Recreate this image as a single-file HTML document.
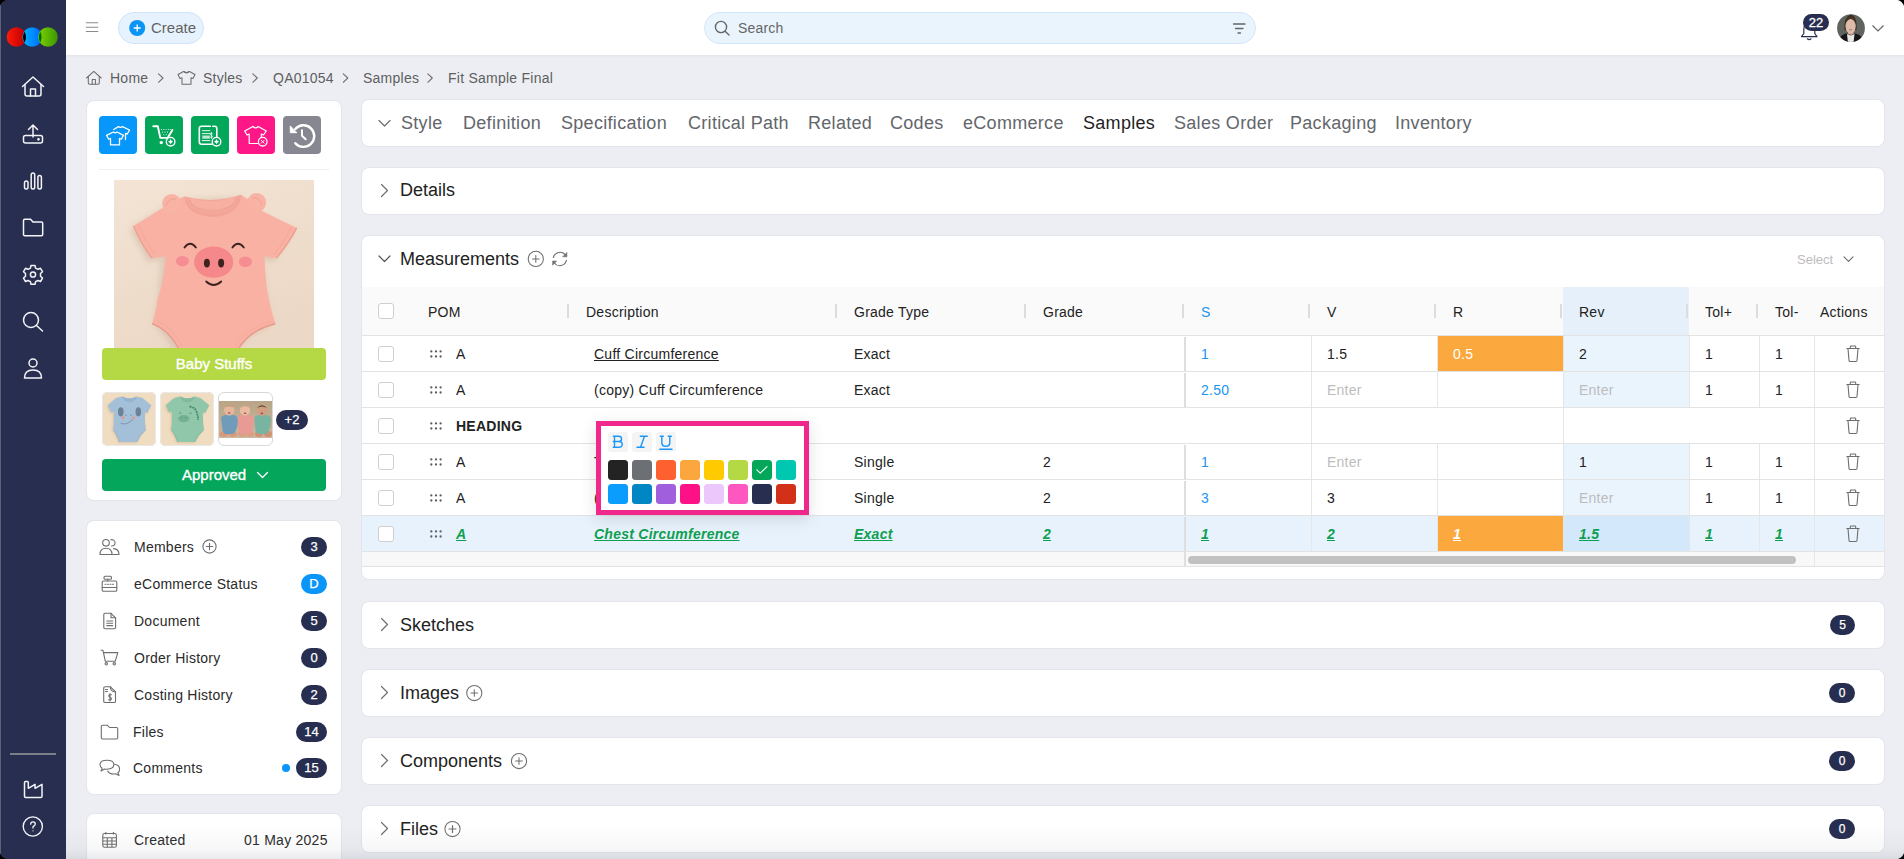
<!DOCTYPE html>
<html><head><meta charset="utf-8">
<style>
*{box-sizing:border-box;margin:0;padding:0}
html,body{width:1904px;height:859px;overflow:hidden}
body{font-family:"Liberation Sans",sans-serif;background:#eceef3;position:relative;color:#222}
.abs{position:absolute}
#side{left:0;top:0;width:66px;height:859px;background:#272e4f}
#hdr{left:66px;top:0;width:1838px;height:55px;background:#fff}
.card{position:absolute;background:#fff;border:1px solid #e3e5ea;border-radius:8px}
.badge{position:absolute;background:#272e4f;color:#fff;font-size:13px;height:20px;border-radius:10px;text-align:center;line-height:20px;-webkit-text-stroke:0.25px #fff}
svg{position:absolute;overflow:visible}
.t{position:absolute;white-space:nowrap}
.t[style*="font-size:14px"]{letter-spacing:0.25px}
</style></head><body>
<div id="side" class="abs">
 <!-- logo -->
 <svg style="left:0;top:0" width="66" height="55">
  <defs>
   <linearGradient id="gr" x1="0" x2="1"><stop offset="0" stop-color="#ff1a0a"/><stop offset="1" stop-color="#b80000"/></linearGradient>
   <linearGradient id="gb" x1="0" x2="1"><stop offset="0" stop-color="#00b4ff"/><stop offset="1" stop-color="#0066ff"/></linearGradient>
   <linearGradient id="gg" x1="0" x2="1"><stop offset="0" stop-color="#7ad400"/><stop offset="1" stop-color="#3c9600"/></linearGradient>
  </defs>
  <circle cx="16.4" cy="37" r="9.8" fill="url(#gr)"/>
  <circle cx="32.2" cy="37" r="9.8" fill="url(#gb)"/>
  <circle cx="48" cy="37" r="9.8" fill="url(#gg)"/>
  <path d="M24.5 31.5 Q21.5 37 24.5 42.5 Q27.5 37 24.5 31.5Z" fill="#000"/>
  <path d="M40.2 31.5 Q37.5 37 40.2 42.5 Q43 37 40.2 31.5Z" fill="#006b00"/>
 </svg>
 <g></g>
 <svg style="left:0;top:0" width="66" height="859" fill="none" stroke="#f4f4f7" stroke-width="1.5" stroke-linecap="round" stroke-linejoin="round">
  <!-- home -->
  <path d="M22.5 86.5 L33 77 L43.5 86.5"/>
  <path d="M25 84.5 V94 Q25 96 27 96 H39 Q41 96 41 94 V84.5"/>
  <path d="M30.5 96 V89 H35.5 V96"/>
  <!-- upload -->
  <path d="M33 137 V125 M28.5 129.5 L33 125 L37.5 129.5"/>
  <rect x="23.5" y="135.5" width="19" height="7.5" rx="2"/>
  <circle cx="38.5" cy="139.3" r="0.6" fill="#fff"/>
  <!-- bar chart -->
  <rect x="24.5" y="181" width="3.5" height="8" rx="1.75"/>
  <rect x="31.2" y="173" width="3.5" height="16" rx="1.75"/>
  <rect x="37.9" y="175.5" width="3.5" height="13.5" rx="1.75"/>
  <!-- folder -->
  <path d="M23.5 220.5 Q23.5 219.3 24.7 219.3 H30.5 L33 222 H41.5 Q42.7 222 42.7 223.2 V234.5 Q42.7 235.7 41.5 235.7 H24.7 Q23.5 235.7 23.5 234.5Z"/>
  <!-- gear -->
  <path d="M31 265.5 h4 l0.6 2.6 l2.4 1.2 l2.5 -1 l2 3.4 l-2 1.8 v2.8 l2 1.8 l-2 3.4 l-2.5 -1 l-2.4 1.2 l-0.6 2.6 h-4 l-0.6 -2.6 l-2.4 -1.2 l-2.5 1 l-2 -3.4 l2 -1.8 v-2.8 l-2 -1.8 l2 -3.4 l2.5 1 l2.4 -1.2 z"/>
  <circle cx="33" cy="274.5" r="2.6"/>
  <!-- search -->
  <circle cx="31" cy="320" r="7.5"/>
  <path d="M36.5 325.5 L42.5 331"/>
  <!-- user -->
  <circle cx="33" cy="363" r="4"/>
  <path d="M24.5 378 Q24.5 370 33 370 Q41.5 370 41.5 378 Z"/>
  <!-- factory -->
  <path d="M24.5 782.5 Q24.5 781.5 25.5 781.5 H27.5 Q28.3 781.5 28.3 782.5 V788.3 L35 784.3 V788.3 L42 784.3 V796.3 Q42 797.5 40.8 797.5 H25.7 Q24.5 797.5 24.5 796.3 Z" stroke-width="1.5"/>
  <!-- help -->
  <circle cx="32.8" cy="826.5" r="9.6" stroke-width="1.4"/>
  <path d="M30.7 824.2 Q30.7 821.8 33 821.8 Q35.3 821.8 35.3 824 Q35.3 825.5 33 826.6 V828" stroke-width="1.3"/>
  <circle cx="33" cy="830.8" r="0.6" fill="#fff" stroke="none"/>
 </svg>
 <div class="abs" style="left:10px;top:753px;width:46px;height:2px;background:#7b7e87"></div>
</div>
<div id="hdr" class="abs"></div>
<div class="abs" style="left:66px;top:55px;width:1838px;height:3px;background:linear-gradient(#e3e5ea,#eceef3)"></div>
<svg style="left:0;top:0" width="1904" height="55" fill="none" stroke-linecap="round">
 <path d="M86.3 22.8 H97.8 M86.3 27.3 H97.8 M86.3 31.5 H97.8" stroke="#8a8a8a" stroke-width="1.1"/>
</svg>
<div class="abs" style="left:118px;top:12px;width:86px;height:32px;border-radius:16px;background:#e6f2fd;border:1px solid #cfe4f8"></div>
<svg style="left:0;top:0" width="300" height="55">
 <circle cx="137.2" cy="28" r="8" fill="#0a95f5"/>
 <path d="M137.2 24.5 V31.5 M133.7 28 H140.7" stroke="#fff" stroke-width="1.3"/>
</svg>
<div class="t" style="left:151px;top:19px;font-size:15px;color:#636363">Create</div>
<div class="abs" style="left:704px;top:12px;width:552px;height:32px;border-radius:16px;background:#eaf4fd;border:1px solid #d3e7fa"></div>
<svg style="left:0;top:0" width="1904" height="55" fill="none" stroke="#666" stroke-width="1.4" stroke-linecap="round">
 <circle cx="721" cy="27" r="5.6"/>
 <path d="M725.2 31.2 L729 35"/>
 <path d="M1233.5 24 H1245 M1235.5 28.5 H1243 M1238 33 H1240.5" stroke-width="1.3"/>
</svg>
<div class="t" style="left:738px;top:20px;font-size:14px;color:#666;letter-spacing:0.2px">Search</div>
<svg style="left:0;top:0" width="1904" height="55" fill="none" stroke="#272e4f" stroke-width="1.3" stroke-linecap="round" stroke-linejoin="round">
 <path d="M1801.5 36.7 H1817 L1814.8 33.5 V29 Q1814.5 23 1809.2 23 Q1804 23 1803.8 29 V33.5 Z" stroke-width="1.2"/>
 <path d="M1807.3 38.8 Q1809.2 40.3 1811 38.8" stroke-width="1.2"/>
</svg>
<div class="abs" style="left:1803px;top:14px;width:26px;height:17px;border-radius:9px;background:#272e4f;color:#fff;font-size:13px;line-height:17px;text-align:center;-webkit-text-stroke:0.3px #fff">22</div>
<svg style="left:0;top:0" width="1904" height="55">
 <defs><clipPath id="avc"><circle cx="1851" cy="28.2" r="13.9"/></clipPath></defs>
 <g clip-path="url(#avc)">
 <rect x="1836" y="13" width="30" height="30" fill="#5f645e"/>
 <path d="M1844.5 30 Q1843.5 17 1850.5 14.5 Q1857.5 15.5 1856.5 30 Z" fill="#3f2c20"/>
 <rect x="1848" y="31" width="5.5" height="5" fill="#cfac97"/>
 <ellipse cx="1850.6" cy="26.3" rx="5.1" ry="7.2" fill="#dcbca9"/>
 <path d="M1845.5 23 Q1847 16.5 1851 16.5 Q1855.5 16.5 1856 23 Q1853 18.5 1851 18.8 Q1848 18.8 1845.5 23Z" fill="#4a3325"/>
 <path d="M1838 43 Q1839 35 1846.5 33.5 L1850.8 35 L1855 33.5 Q1863 35 1864 43 Z" fill="#161616"/>
 <path d="M1847 34 L1850.8 35.5 L1854.5 34 L1853.5 43 H1848 Z" fill="#e8e8e6"/>
 <ellipse cx="1850.6" cy="29.8" rx="1.8" ry="0.7" fill="#b88378"/>
 </g>
 <path d="M1872.5 25.5 L1878 31 L1883.5 25.5" fill="none" stroke="#666" stroke-width="1.2"/>
</svg>


<!-- breadcrumb -->
<svg style="left:0;top:0" width="600" height="100" fill="none" stroke="#6d6d6d" stroke-width="1.05" stroke-linecap="round" stroke-linejoin="round">
 <path d="M86.5 78 L93.8 71.3 L101.2 78"/>
 <path d="M88.3 76.5 V83 Q88.3 84.3 89.6 84.3 H98 Q99.3 84.3 99.3 83 V76.5"/>
 <path d="M92.2 84.3 V79.5 H95.4 V84.3"/>
 <path d="M158.5 73.8 L163 78 L158.5 82.3"/>
 <path d="M252.8 73.8 L257.3 78 L252.8 82.3"/>
 <path d="M343.3 73.8 L347.8 78 L343.3 82.3"/>
 <path d="M427.8 73.8 L432.3 78 L427.8 82.3"/>
 <path d="M183.5 71.5 Q186.5 74.5 189.5 71.5 L195 74.5 L193 78.5 L191 77.8 V84.3 H182 V77.8 L180 78.5 L178 74.5 Z"/>
 <path d="M184.2 71.5 Q186.5 73.6 188.8 71.5"/>
</svg>
<div class="t" style="left:110px;top:70px;font-size:14px;color:#5f5f5f">Home</div>
<div class="t" style="left:203px;top:70px;font-size:14px;color:#5f5f5f">Styles</div>
<div class="t" style="left:273px;top:70px;font-size:14px;color:#5f5f5f">QA01054</div>
<div class="t" style="left:363px;top:70px;font-size:14px;color:#5f5f5f">Samples</div>
<div class="t" style="left:448px;top:70px;font-size:14px;color:#5f5f5f">Fit Sample Final</div>

<!-- left card 1 -->
<div class="card" style="left:86px;top:100px;width:256px;height:401px"></div>
<div class="abs" style="left:99px;top:116px;width:38px;height:38px;border-radius:4px;background:#0797fb"></div>
<div class="abs" style="left:145px;top:116px;width:38px;height:38px;border-radius:4px;background:#04a65a"></div>
<div class="abs" style="left:191px;top:116px;width:38px;height:38px;border-radius:4px;background:#04a65a"></div>
<div class="abs" style="left:237px;top:116px;width:38px;height:38px;border-radius:4px;background:#fe1787"></div>
<div class="abs" style="left:283px;top:116px;width:38px;height:38px;border-radius:4px;background:#868791"></div>
<svg style="left:0;top:0" width="400" height="200" fill="none" stroke="#fff" stroke-width="1.3" stroke-linecap="round" stroke-linejoin="round">
 <!-- shirts -->
 <path d="M113.5 132 Q115.2 133.8 117 132 L123.5 135.3 L121.3 139.2 L119.5 138.5 V144.8 H110.5 V138.5 L108.7 139.2 L106.5 135.3 Z"/>
 <path d="M113.7 129.5 L118.5 126.6 Q120.5 128.3 122.5 126.6 L129.5 130 L127.3 134 L125.5 133.5 V139.5"/>
 <!-- cart -->
 <path d="M153.3 126.3 H157.8 L160.3 137.9 H167.6 L172.4 130" stroke-width="1.9"/>
 <circle cx="161.5" cy="129.5" r="0.55" fill="#fff" stroke="none"/><circle cx="163.8" cy="129.5" r="0.55" fill="#fff" stroke="none"/><circle cx="166.1" cy="129.5" r="0.55" fill="#fff" stroke="none"/><circle cx="168.4" cy="129.5" r="0.55" fill="#fff" stroke="none"/><circle cx="170.3" cy="129.5" r="0.55" fill="#fff" stroke="none"/><circle cx="162.5" cy="132.1" r="0.55" fill="#fff" stroke="none"/><circle cx="165" cy="132.1" r="0.55" fill="#fff" stroke="none"/><circle cx="167.5" cy="132.1" r="0.55" fill="#fff" stroke="none"/><circle cx="163.8" cy="134.7" r="0.55" fill="#fff" stroke="none"/><circle cx="166.2" cy="134.7" r="0.55" fill="#fff" stroke="none"/>
 <circle cx="161.3" cy="142.6" r="1.7" fill="#fff" stroke="none"/>
 <circle cx="170.6" cy="141.7" r="4.3" stroke-width="1.4" fill="#04a65a"/>
 <path d="M170.6 139.1 Q171.1 141.2 173.2 141.7 Q171.1 142.2 170.6 144.29999999999998 Q170.1 142.2 168.0 141.7 Q170.1 141.2 170.6 139.1Z" fill="#fff" stroke="none"/>
 <!-- invoice -->
 <path d="M210.3 126.2 H201.5 Q199.3 126.2 199.3 128.4 V142 Q199.3 144.2 201.5 144.2 H212" stroke-width="1.6"/>
 <path d="M212.8 126.2 H214.6 Q216.8 126.2 216.8 128.4 V137.5" stroke-width="1.6"/>
 <path d="M202.3 130.7 H209.8 M202.3 133.6 H209.8 M202.3 140.6 H209.8" stroke-width="0.9"/>
 <rect x="202.3" y="135.5" width="7.5" height="3.2" fill="#fff" stroke="none" opacity="0.75"/>
 <path d="M212.6 134 Q212.1 133.2 211.3 133.2 Q210.3 133.3 210.4 134.3 Q210.6 135.2 211.4 135.4 Q212.5 135.8 212.4 136.8 Q212.2 137.7 211.2 137.6 Q210.5 137.5 210.2 137 M211.4 132.4 V138.4" stroke-width="0.8"/>
 <circle cx="216.5" cy="141.7" r="4.3" stroke-width="1.4" fill="#04a65a"/>
 <path d="M216.5 139.1 Q217.0 141.2 219.1 141.7 Q217.0 142.2 216.5 144.29999999999998 Q216.0 142.2 213.9 141.7 Q216.0 141.2 216.5 139.1Z" fill="#fff" stroke="none"/>
 <!-- shirt x -->
 <path d="M253 126.5 Q255.6 129.3 258.2 126.5 L266.3 131 L263.5 135 L261.3 134 V136.8" stroke-width="1.2"/><path d="M258 143.5 H249.2 V134 L247 135 L244.7 131 L253 126.5" stroke-width="1.2"/>
 <circle cx="262.7" cy="141.7" r="4.3" stroke-width="1.3"/>
 <path d="M261.3 140.3 L264.1 143.1 M264.1 140.3 L261.3 143.1" stroke-width="1"/>
 <!-- history -->
 <path d="M295.3 129 A10.8 10.8 0 1 1 295.3 143.2" stroke-width="2.4"/>
 <path d="M290.3 126.3 V132.7 H296.5 Z" fill="#fff" stroke-width="1"/>
 <path d="M302 130.3 V135.8 L305.7 139.3" stroke-width="2"/>
</svg>
<div class="abs" style="left:99px;top:169px;width:230px;height:1px;background:#eceef1"></div>

<!-- main image -->
<svg style="left:114px;top:180px" width="200" height="168" viewBox="0 0 200 168">
 <defs>
  <linearGradient id="bg1" x1="0" y1="0" x2="0.4" y2="1"><stop offset="0" stop-color="#f3e4d5"/><stop offset="1" stop-color="#ecd8c6"/></linearGradient>
  <filter id="bl" x="-20%" y="-20%" width="140%" height="140%"><feGaussianBlur stdDeviation="3"/></filter>
 </defs>
 <rect width="200" height="168" fill="url(#bg1)"/>
 <path d="M70 17 L52 25.5 L19 46 L37 79 L50.5 76 Q48 110 43 141 Q55 152 63 168 H126 Q134 152 160 142 Q155 110 151 76 L162 79 L183 48 L148 31 L127 15 Z" fill="#cfb29e" opacity="0.55" filter="url(#bl)" transform="translate(-3,3)"/>
 <path d="M70.4 16.6 Q61 20 52.8 25.4 L19.5 46 Q27 64 38.1 78.2 L51.8 76.2 Q49 105 44 117.3 Q42 132 38.1 143.7 Q55 150 64.5 168 H125 Q136 150 161.3 143.7 Q157 130 154.4 117.3 Q151 100 150.5 76.2 L162.3 78.2 Q175 63 182.8 47.9 L148.6 31.3 Q138 21 127 14.7 Q99 28 70.4 16.6Z" fill="#f9b1a4"/>
 <path d="M19.5 46 Q27 64 38.1 78.2 M182.8 47.9 Q175 63 162.3 78.2" stroke="#eb9d8f" stroke-width="1.2" fill="none"/>
 <path d="M24 44 Q31 61 41 75 M178 46 Q171 61 160 75" stroke="#f2a596" stroke-width="0.8" fill="none"/>
 <path d="M70.4 16.6 C71 44 127 44 127 14.7 Q99 24 70.4 16.6Z" fill="#f4a698"/>
 <path d="M75.5 18 C76.5 35.5 121.5 35.5 122 16.5 Q99 25 75.5 18Z" fill="#f8b0a2"/>
 <path d="M76 19.5 C77 34 121 34 121.5 18" stroke="#eba092" stroke-width="0.9" fill="none"/>
 <path d="M72.5 20 C74 41 125 41 125.5 17.5" stroke="#eda193" stroke-width="0.7" fill="none"/>
 <circle cx="57.7" cy="23.5" r="9.5" fill="#f9b3a5"/>
 <circle cx="142.7" cy="22.5" r="9.5" fill="#f9b3a5"/>
 <path d="M52 26 Q55 17 62 19" stroke="#eea092" stroke-width="1" fill="none"/>
 <path d="M148 25 Q145 16 138 18" stroke="#eea092" stroke-width="1" fill="none"/>
 <path d="M38.1 143.7 Q55 150 64.5 168 M125 168 Q136 150 161.3 143.7" stroke="#e8998b" stroke-width="1.4" fill="none"/>
 <path d="M43 141 Q58 147 68 166 M121 166 Q133 148 157 141" stroke="#f4a899" stroke-width="0.8" fill="none"/>
 <path d="M70.5 67.5 Q76.2 60 81.9 67.5 M118.4 67.5 Q124.1 60 129.8 67.5" stroke="#3d231d" stroke-width="1.9" fill="none" stroke-linecap="round"/>
 <ellipse cx="68.4" cy="81.1" rx="6.6" ry="5.2" fill="#f58d93"/>
 <ellipse cx="131.4" cy="81.7" rx="6.6" ry="5.2" fill="#f58d93"/>
 <ellipse cx="99.7" cy="82.1" rx="19.6" ry="15.6" fill="#f4888b"/>
 <ellipse cx="92.9" cy="83.1" rx="3" ry="4.4" fill="#3d231d"/>
 <ellipse cx="107.1" cy="83.1" rx="3" ry="4.4" fill="#3d231d"/>
 <path d="M92.2 101.5 Q99.7 108.5 107.2 101.5" stroke="#3d231d" stroke-width="1.9" fill="none" stroke-linecap="round"/>
</svg>
<div class="abs" style="left:102px;top:348px;width:224px;height:32px;border-radius:4px;background:#b4d944;color:#fff;font-size:15px;-webkit-text-stroke:0.35px #fff;text-align:center;line-height:32px">Baby Stuffs</div>
<!-- thumbs -->
<svg style="left:102px;top:392px" width="54" height="54" viewBox="0 0 54 54">
 <defs><clipPath id="c1"><rect width="54" height="54" rx="5"/></clipPath>
 <filter id="bl2" x="-20%" y="-20%" width="140%" height="140%"><feGaussianBlur stdDeviation="1.2"/></filter><filter id="bl3"><feGaussianBlur stdDeviation="0.5"/></filter></defs>
 <g clip-path="url(#c1)">
 <rect width="54" height="54" fill="#f0dcc0"/>
 <path d="M20.3 4.4 Q27.5 8.5 34.8 4.4 L40.5 6.1 L49.3 13.2 L45.3 21 L42.9 20.3 Q42.6 30 43.9 37.8 Q38.5 42.5 34.8 50 H17.6 Q15 42.5 11.2 37.8 Q12.4 30 11.8 19.6 L9.1 20.6 L5.8 13.2 L14.2 6.1 Z" fill="#c9ae8e" opacity="0.5" filter="url(#bl2)" transform="translate(-1,1)"/>
 <path d="M20.3 4.4 Q27.5 8.5 34.8 4.4 L40.5 6.1 L49.3 13.2 L45.3 21 L42.9 20.3 Q42.6 30 43.9 37.8 Q38.5 42.5 34.8 50 H17.6 Q15 42.5 11.2 37.8 Q12.4 30 11.8 19.6 L9.1 20.6 L5.8 13.2 L14.2 6.1 Z" fill="#a4c0d9"/>
 <path d="M20.3 4.4 Q27.5 8.5 34.8 4.4 Q33.5 10 27.5 10.5 Q21.5 10 20.3 4.4Z" fill="#97b4ce"/>
 <ellipse cx="18.8" cy="19.8" rx="2.8" ry="4.6" fill="#6d8197"/>
 <ellipse cx="36.3" cy="19.8" rx="2.8" ry="4.6" fill="#6d8197"/>
 <circle cx="21.2" cy="25.8" r="1.4" fill="#f08c8c"/>
 <circle cx="31.6" cy="25.8" r="1.4" fill="#f08c8c"/>
 <path d="M23 23.5 Q24 22.5 25 23.5 M28 23.5 Q29 22.5 30 23.5" stroke="#6d8197" stroke-width="0.6" fill="none"/>
 <path d="M18.5 31 Q24 33.5 28 29.5 Q30 28 31 27.5" stroke="#6d8197" stroke-width="0.7" fill="none"/>
 <path d="M11.5 37.8 Q15 42 17.6 50 M34.8 50 Q38 42 43.6 37.8" stroke="#8eaac3" stroke-width="0.7" fill="none"/>
 </g>
 <rect x="0.5" y="0.5" width="53" height="53" rx="5" fill="none" stroke="#e9e9e9"/>
</svg>
<svg style="left:160px;top:392px" width="54" height="54" viewBox="0 0 54 54">
 <defs><clipPath id="c2"><rect width="54" height="54" rx="5"/></clipPath></defs>
 <g clip-path="url(#c2)">
 <rect width="54" height="54" fill="#f0dcc0"/>
 <path d="M20.3 4.4 Q27.5 8.5 34.8 4.4 L40.5 6.1 L49.3 13.2 L45.3 21 L42.9 20.3 Q42.6 30 43.9 37.8 Q38.5 42.5 34.8 50 H17.6 Q15 42.5 11.2 37.8 Q12.4 30 11.8 19.6 L9.1 20.6 L5.8 13.2 L14.2 6.1 Z" fill="#c9ae8e" opacity="0.5" filter="url(#bl2)" transform="translate(-1,1)"/>
 <path d="M20.3 4.4 Q27.5 8.5 34.8 4.4 L40.5 6.1 L49.3 13.2 L45.3 21 L42.9 20.3 Q42.6 30 43.9 37.8 Q38.5 42.5 34.8 50 H17.6 Q15 42.5 11.2 37.8 Q12.4 30 11.8 19.6 L9.1 20.6 L5.8 13.2 L14.2 6.1 Z" fill="#90c6a9"/>
 <path d="M20.3 4.4 Q27.5 8.5 34.8 4.4 Q33.5 10 27.5 10.5 Q21.5 10 20.3 4.4Z" fill="#83b99c"/>
 <ellipse cx="23.8" cy="26.6" rx="5.6" ry="3.6" fill="#74b091"/>
 <path d="M19 21.5 Q20.3 20 21.6 21.5 M29.2 21.5 Q30.5 20 31.8 21.5" stroke="#3f8e6a" stroke-width="0.7" fill="none"/>
 <circle cx="21.5" cy="25.8" r="0.5" fill="#3f8e6a"/><circle cx="25.5" cy="25.8" r="0.5" fill="#3f8e6a"/>
 <path d="M29.5 14.5 Q33 15 35 17 Q37 20 37.5 23 Q38 25.5 38.2 28" stroke="#3f8e6a" stroke-width="1.8" fill="none" stroke-dasharray="2 0.8"/>
 <path d="M11.5 37.8 Q15 42 17.6 50 M34.8 50 Q38 42 43.6 37.8" stroke="#7fb596" stroke-width="0.7" fill="none"/>
 </g>
 <rect x="0.5" y="0.5" width="53" height="53" rx="5" fill="none" stroke="#e9e9e9"/>
</svg>
<svg style="left:218px;top:392px" width="55" height="54" viewBox="0 0 55 54">
 <defs><clipPath id="c3"><rect x="1" y="9" width="53" height="37"/></clipPath>
 <linearGradient id="pb" x1="0" y1="0" x2="0" y2="1"><stop offset="0" stop-color="#b9a487"/><stop offset="1" stop-color="#cbb89e"/></linearGradient></defs>
 <rect x="0.5" y="0.5" width="54" height="53" rx="5.5" fill="#fff" stroke="#d8d8d8"/>
 <g clip-path="url(#c3)" filter="url(#bl3)">
 <rect x="1" y="9" width="53" height="37" fill="url(#pb)"/>
 <ellipse cx="6" cy="42" rx="5" ry="3" fill="#d99a7c"/><ellipse cx="15" cy="42" rx="4" ry="3" fill="#d99a7c"/>
 <ellipse cx="24" cy="42" rx="4" ry="3" fill="#dba084"/><ellipse cx="32" cy="42" rx="4" ry="3" fill="#dba084"/>
 <ellipse cx="41" cy="42" rx="4" ry="3" fill="#cf9274"/><ellipse cx="50" cy="42" rx="4" ry="3" fill="#cf9274"/>
 <path d="M3 26 Q4 23 8 23 H15 Q19 23 20 27 L19.5 33 Q18 40 15 42 H7 Q4 40 4 33Z" fill="#6f9cb9"/>
 <path d="M19.5 26 Q20.5 23 24 23 H31 Q35 23 36 27 L35.5 33 Q34 40 31 42 H23 Q20 40 20 33Z" fill="#e89b95"/>
 <path d="M36.5 26 Q37.5 23 41 23 H48 Q52 23 53 27 L52.5 33 Q51 40 48 42 H40 Q37 40 37 33Z" fill="#78b4a2"/>
 <circle cx="11.2" cy="18.2" r="5.2" fill="#e6b79c"/>
 <circle cx="27" cy="18.4" r="5.2" fill="#e9bca2"/>
 <circle cx="43.9" cy="18.6" r="5.2" fill="#d29e80"/>
 <path d="M6.5 15.5 Q11 11 16 15.5 Q11 13 6.5 15.5Z" fill="#b88560"/>
 <path d="M22.3 15.5 Q27 11 31.8 15.5 Q27 13 22.3 15.5Z" fill="#c49670"/>
 <path d="M38.8 16 Q44 10.5 49 16 Q44 13 38.8 16Z" fill="#5e402c"/>
 <ellipse cx="11.2" cy="21" rx="1.3" ry="0.8" fill="#a04a44"/><ellipse cx="27" cy="21.2" rx="1.3" ry="0.8" fill="#a04a44"/><ellipse cx="43.9" cy="21.4" rx="1.3" ry="0.8" fill="#a04a44"/>
 </g>
</svg>
<div class="badge" style="left:276px;top:410px;width:32px;font-size:13px">+2</div>
<div class="abs" style="left:102px;top:459px;width:224px;height:32px;border-radius:4px;background:#03a65a;color:#fff;font-size:15px;-webkit-text-stroke:0.35px #fff;line-height:32px"><span style="position:absolute;left:80px">Approved</span></div>
<svg style="left:0;top:0" width="400" height="500" fill="none" stroke="#fff" stroke-width="1.3" stroke-linecap="round" stroke-linejoin="round">
 <path d="M257.5 472.5 L262.5 477.5 L267.5 472.5"/>
</svg>

<!-- left card 2 -->
<div class="card" style="left:86px;top:520px;width:256px;height:275px"></div>

<svg style="left:0;top:0" width="400" height="859" fill="none" stroke="#6e6e6e" stroke-width="1.1" stroke-linecap="round" stroke-linejoin="round">
 <!-- members -->
 <circle cx="106" cy="542.8" r="3.3"/>
 <path d="M100 554.5 Q100 548.3 106 548.3 Q112 548.3 112 554.5 Z"/>
 <path d="M110.8 539.8 A3.2 3.2 0 1 1 111.5 546"/>
 <path d="M113.5 548.6 Q119 549 119 554.5 H112.5"/>
 <circle cx="209.5" cy="546.5" r="6.6"/>
 <path d="M209.5 543.2 V549.8 M206.2 546.5 H212.8"/>
 <!-- ecommerce register -->
 <rect x="104" y="576.3" width="7.5" height="3" rx="1"/>
 <path d="M107.7 579.3 V581"/>
 <path d="M103.5 581 H115.5 Q116.8 581 116.8 582.5 V587.5 H102.2 V582.5 Q102.2 581 103.5 581Z"/>
 <path d="M102.2 587.5 V590 Q102.2 591.3 103.5 591.3 H115.5 Q116.8 591.3 116.8 590 V587.5"/>
 <path d="M105 584.2 H114.5" stroke-dasharray="1 1.5"/>
 <!-- document -->
 <path d="M105 613.3 H111 L115.6 617.8 V627.5 Q115.6 628.7 114.4 628.7 H105 Q103.8 628.7 103.8 627.5 V614.5 Q103.8 613.3 105 613.3Z"/>
 <path d="M111 613.3 V617.8 H115.6"/>
 <path d="M106.8 621 H112.7 M106.8 623.3 H112.7 M106.8 625.6 H112.7"/>
 <!-- cart -->
 <path d="M101 650.3 H103 L105.3 661.3 H115.2 L117.8 652.6 H104"/>
 <circle cx="106.3" cy="663.8" r="1.2"/>
 <circle cx="114.3" cy="663.8" r="1.2"/>
 <!-- costing -->
 <path d="M105 686.8 H110.5 L115.5 691.8 V701.2 Q115.5 702.5 114.2 702.5 H105 Q103.7 702.5 103.7 701.2 V688.1 Q103.7 686.8 105 686.8Z"/>
 <path d="M110.3 687 Q110.5 691.5 115.3 692"/>
 <path d="M105.5 689.5 H107.5 M105.5 691.5 H107.5"/>
 <path d="M111.4 694.8 Q109.2 694 108.8 695.7 Q108.8 697 109.8 697.2 Q111.6 697.6 111.4 699 Q110.8 700.6 108.6 699.8 M110 693.5 V701"/>
 <!-- files folder -->
 <path d="M101.3 726.5 Q101.3 725.3 102.5 725.3 H107.5 L109.5 727.5 H116.5 Q117.7 727.5 117.7 728.7 V737.8 Q117.7 739 116.5 739 H102.5 Q101.3 739 101.3 737.8Z"/>
 <!-- comments -->
 <path d="M107 760.2 Q100 760.2 100 764.6 Q100 767.2 102.2 768.2 L101 771 L104.6 769 Q105.7 769.2 107 769.2 Q113.8 769.2 113.8 764.6 Q113.8 760.2 107 760.2Z"/>
 <path d="M114.6 764.3 Q119.6 765 119.6 769.2 Q119.6 771.5 117.9 772.5 L119 775.5 L115.8 773.8 Q114.8 774 113.8 774 Q109 774 107.8 771"/>
 <!-- calendar -->
 <rect x="102.8" y="833.5" width="13.6" height="13.7" rx="1.8"/>
 <path d="M102.8 837.7 H116.4 M102.8 841 H116.4 M102.8 844.2 H116.4 M107.3 837.7 V847 M111.9 837.7 V847 M105.8 832 V834.5 M113.4 832 V834.5"/>
</svg>
<div class="t" style="left:134px;top:539px;font-size:14px;color:#2a2a2a">Members</div>
<div class="t" style="left:134px;top:576px;font-size:14px;color:#2a2a2a">eCommerce Status</div>
<div class="t" style="left:134px;top:613px;font-size:14px;color:#2a2a2a">Document</div>
<div class="t" style="left:134px;top:650px;font-size:14px;color:#2a2a2a">Order History</div>
<div class="t" style="left:134px;top:687px;font-size:14px;color:#2a2a2a">Costing History</div>
<div class="t" style="left:133px;top:724px;font-size:14px;color:#2a2a2a">Files</div>
<div class="t" style="left:133px;top:760px;font-size:14px;color:#2a2a2a">Comments</div>
<div class="badge" style="left:301px;top:537px;width:26px">3</div>
<div class="badge" style="left:301px;top:574px;width:26px;background:#0a96f8">D</div>
<div class="badge" style="left:301px;top:611px;width:26px">5</div>
<div class="badge" style="left:301px;top:648px;width:26px">0</div>
<div class="badge" style="left:301px;top:685px;width:26px">2</div>
<div class="badge" style="left:296px;top:722px;width:31px">14</div>
<div class="abs" style="left:281.5px;top:764px;width:8px;height:8px;border-radius:4px;background:#0a96f8"></div>
<div class="badge" style="left:296px;top:758px;width:31px">15</div>

<!-- left card 3 -->
<div class="card" style="left:86px;top:813px;width:256px;height:80px"></div>
<svg style="left:0;top:0" width="400" height="859" fill="none" stroke="#6e6e6e" stroke-width="1.1">
 <rect x="102.8" y="833.5" width="13.6" height="13.7" rx="1.8"/>
 <path d="M102.8 837.7 H116.4 M102.8 841 H116.4 M102.8 844.2 H116.4 M107.3 837.7 V847 M111.9 837.7 V847 M105.8 832 V834.5 M113.4 832 V834.5"/>
</svg>
<div class="t" style="left:134px;top:832px;font-size:14px;color:#2a2a2a">Created</div>
<div class="t" style="left:244px;top:832px;font-size:14px;color:#2a2a2a">01 May 2025</div>

<!-- main cards -->
<div class="card" style="left:361px;top:99px;width:1524px;height:48px"></div>
<div class="card" style="left:361px;top:167px;width:1524px;height:48px"></div>
<div class="card" style="left:361px;top:235px;width:1524px;height:345px;overflow:hidden" id="meas"></div>
<div class="card" style="left:361px;top:601px;width:1524px;height:48px"></div>
<div class="card" style="left:361px;top:669px;width:1524px;height:48px"></div>
<div class="card" style="left:361px;top:737px;width:1524px;height:48px"></div>
<div class="card" style="left:361px;top:805px;width:1524px;height:48px"></div>
<svg style="left:0;top:0" width="1904" height="859" fill="none" stroke="#6e6e6e" stroke-width="1.2" stroke-linecap="round" stroke-linejoin="round">
 <path d="M379 120.5 L384.5 126 L390 120.5"/>
 <path d="M381.5 184.5 L387.5 190.5 L381.5 196.5"/>
 <path d="M379 256 L384.5 261.5 L390 256" stroke="#555"/>
 <path d="M381.5 618.5 L387.5 624.5 L381.5 630.5"/>
 <path d="M381.5 686.5 L387.5 692.5 L381.5 698.5"/>
 <path d="M381.5 754.5 L387.5 760.5 L381.5 766.5"/>
 <path d="M381.5 822.5 L387.5 828.5 L381.5 834.5"/>
 <circle cx="535.8" cy="258.9" r="7.6" stroke-width="1.05"/>
 <path d="M535.8 255.6 V262.2 M532.5 258.9 H539.1" stroke-width="1.05"/>
 <path d="M553.3 257.5 A6.9 6.9 0 0 1 565.6 255.2" stroke-width="1.1"/>
 <path d="M566.9 252.8 V256.8 H562.9 Z" fill="#6e6e6e" stroke-width="0.6"/>
 <path d="M566.4 260.4 A6.9 6.9 0 0 1 554.1 262.8" stroke-width="1.1"/>
 <path d="M552.8 261.1 H556.6 L552.8 265 Z" fill="#6e6e6e" stroke-width="0.6"/>
 <circle cx="474.3" cy="693" r="7.6" stroke-width="1.05"/>
 <path d="M474.3 689.7 V696.3 M471.0 693 H477.6" stroke-width="1.05"/>
 <circle cx="519" cy="761" r="7.6" stroke-width="1.05"/>
 <path d="M519 757.7 V764.3 M515.7 761 H522.3" stroke-width="1.05"/>
 <circle cx="452.5" cy="829" r="7.6" stroke-width="1.05"/>
 <path d="M452.5 825.5 V832.5 M449 829 H456"/>
 <path d="M1844 256.8 L1848.5 261.3 L1853 256.8" stroke="#6a6a6a" stroke-width="1.1"/>
</svg>
<div class="t" style="left:401px;top:113px;font-size:18px;letter-spacing:0.3px;color:#63666b">Style</div>
<div class="t" style="left:463px;top:113px;font-size:18px;letter-spacing:0.3px;color:#63666b">Definition</div>
<div class="t" style="left:561px;top:113px;font-size:18px;letter-spacing:0.3px;color:#63666b">Specification</div>
<div class="t" style="left:688px;top:113px;font-size:18px;letter-spacing:0.3px;color:#63666b">Critical Path</div>
<div class="t" style="left:808px;top:113px;font-size:18px;letter-spacing:0.3px;color:#63666b">Related</div>
<div class="t" style="left:890px;top:113px;font-size:18px;letter-spacing:0.3px;color:#63666b">Codes</div>
<div class="t" style="left:963px;top:113px;font-size:18px;letter-spacing:0.3px;color:#63666b">eCommerce</div>
<div class="t" style="left:1083px;top:113px;font-size:18px;letter-spacing:0.3px;color:#1f1f1f">Samples</div>
<div class="t" style="left:1174px;top:113px;font-size:18px;letter-spacing:0.3px;color:#63666b">Sales Order</div>
<div class="t" style="left:1290px;top:113px;font-size:18px;letter-spacing:0.3px;color:#63666b">Packaging</div>
<div class="t" style="left:1395px;top:113px;font-size:18px;letter-spacing:0.3px;color:#63666b">Inventory</div>
<div class="t" style="left:400px;top:180px;font-size:18px;color:#222">Details</div>
<div class="t" style="left:400px;top:249px;font-size:18px;color:#222">Measurements</div>
<div class="t" style="left:1797px;top:252px;font-size:13px;color:#bcbcbc">Select</div>
<div class="t" style="left:400px;top:615px;font-size:18px;color:#222">Sketches</div>
<div class="t" style="left:400px;top:683px;font-size:18px;color:#222">Images</div>
<div class="t" style="left:400px;top:751px;font-size:18px;color:#222">Components</div>
<div class="t" style="left:400px;top:819px;font-size:18px;color:#222">Files</div>
<div class="badge" style="left:1830px;top:615px;width:25px;font-size:12px">5</div>
<div class="badge" style="left:1829px;top:683px;width:26px;font-size:12px">0</div>
<div class="badge" style="left:1829px;top:751px;width:26px;font-size:12px">0</div>
<div class="badge" style="left:1829px;top:819px;width:26px;font-size:12px">0</div>

<!-- table -->
<div class="abs" style="left:362px;top:287px;width:1522px;height:48px;background:#fafafa"></div>
<div class="abs" style="left:1563px;top:287px;width:126px;height:48px;background:#e6f0fa"></div>
<div class="abs" style="left:362px;top:335px;width:1522px;height:1px;background:#e3e3e3"></div>
<div class="abs" style="left:567px;top:304px;width:2px;height:14px;background:#dcdcdc"></div>
<div class="abs" style="left:835px;top:304px;width:2px;height:14px;background:#dcdcdc"></div>
<div class="abs" style="left:1024px;top:304px;width:2px;height:14px;background:#dcdcdc"></div>
<div class="abs" style="left:1182px;top:304px;width:2px;height:14px;background:#dcdcdc"></div>
<div class="abs" style="left:1308px;top:304px;width:2px;height:14px;background:#dcdcdc"></div>
<div class="abs" style="left:1434px;top:304px;width:2px;height:14px;background:#dcdcdc"></div>
<div class="abs" style="left:1560px;top:304px;width:2px;height:14px;background:#dcdcdc"></div>
<div class="abs" style="left:1686px;top:304px;width:2px;height:14px;background:#dcdcdc"></div>
<div class="abs" style="left:1756px;top:304px;width:2px;height:14px;background:#dcdcdc"></div>
<div class="abs" style="left:1563px;top:336px;width:126px;height:35px;background:#eaf4fd"></div>
<div class="abs" style="left:1563px;top:372px;width:126px;height:35px;background:#eaf4fd"></div>
<div class="abs" style="left:1563px;top:444px;width:126px;height:35px;background:#eaf4fd"></div>
<div class="abs" style="left:1563px;top:480px;width:126px;height:35px;background:#eaf4fd"></div>
<div class="abs" style="left:362px;top:516px;width:1522px;height:35px;background:#e8f2fc"></div>
<div class="abs" style="left:1563px;top:516px;width:126px;height:35px;background:#d4e8fb"></div>
<div class="abs" style="left:1437px;top:336px;width:126px;height:35px;background:#fba93f"></div>
<div class="abs" style="left:1437px;top:516px;width:126px;height:35px;background:#fba93f"></div>
<div class="abs" style="left:362px;top:551px;width:1522px;height:15px;background:#f8f8f8"></div>
<div class="abs" style="left:362px;top:371px;width:1522px;height:1px;background:#e3e3e3"></div>
<div class="abs" style="left:362px;top:407px;width:1522px;height:1px;background:#e3e3e3"></div>
<div class="abs" style="left:362px;top:443px;width:1522px;height:1px;background:#e3e3e3"></div>
<div class="abs" style="left:362px;top:479px;width:1522px;height:1px;background:#e3e3e3"></div>
<div class="abs" style="left:362px;top:515px;width:1522px;height:1px;background:#e3e3e3"></div>
<div class="abs" style="left:362px;top:551px;width:1522px;height:1px;background:#e3e3e3"></div>
<div class="abs" style="left:362px;top:566px;width:1522px;height:1px;background:#e3e3e3"></div>
<div class="abs" style="left:1183.5px;top:337px;width:2px;height:34px;background:#dedede"></div>
<div class="abs" style="left:1311px;top:336px;width:1px;height:35px;background:#e6e6e6"></div>
<div class="abs" style="left:1437px;top:336px;width:1px;height:35px;background:#e6e6e6"></div>
<div class="abs" style="left:1563px;top:336px;width:1px;height:35px;background:#e6e6e6"></div>
<div class="abs" style="left:1689px;top:336px;width:1px;height:35px;background:#e6e6e6"></div>
<div class="abs" style="left:1759px;top:336px;width:1px;height:35px;background:#e6e6e6"></div>
<div class="abs" style="left:1814px;top:336px;width:1px;height:35px;background:#e6e6e6"></div>
<div class="abs" style="left:1183.5px;top:373px;width:2px;height:34px;background:#dedede"></div>
<div class="abs" style="left:1311px;top:372px;width:1px;height:35px;background:#e6e6e6"></div>
<div class="abs" style="left:1437px;top:372px;width:1px;height:35px;background:#e6e6e6"></div>
<div class="abs" style="left:1563px;top:372px;width:1px;height:35px;background:#e6e6e6"></div>
<div class="abs" style="left:1689px;top:372px;width:1px;height:35px;background:#e6e6e6"></div>
<div class="abs" style="left:1759px;top:372px;width:1px;height:35px;background:#e6e6e6"></div>
<div class="abs" style="left:1814px;top:372px;width:1px;height:35px;background:#e6e6e6"></div>
<div class="abs" style="left:1183.5px;top:445px;width:2px;height:34px;background:#dedede"></div>
<div class="abs" style="left:1311px;top:444px;width:1px;height:35px;background:#e6e6e6"></div>
<div class="abs" style="left:1437px;top:444px;width:1px;height:35px;background:#e6e6e6"></div>
<div class="abs" style="left:1563px;top:444px;width:1px;height:35px;background:#e6e6e6"></div>
<div class="abs" style="left:1689px;top:444px;width:1px;height:35px;background:#e6e6e6"></div>
<div class="abs" style="left:1759px;top:444px;width:1px;height:35px;background:#e6e6e6"></div>
<div class="abs" style="left:1814px;top:444px;width:1px;height:35px;background:#e6e6e6"></div>
<div class="abs" style="left:1183.5px;top:481px;width:2px;height:34px;background:#dedede"></div>
<div class="abs" style="left:1311px;top:480px;width:1px;height:35px;background:#e6e6e6"></div>
<div class="abs" style="left:1437px;top:480px;width:1px;height:35px;background:#e6e6e6"></div>
<div class="abs" style="left:1563px;top:480px;width:1px;height:35px;background:#e6e6e6"></div>
<div class="abs" style="left:1689px;top:480px;width:1px;height:35px;background:#e6e6e6"></div>
<div class="abs" style="left:1759px;top:480px;width:1px;height:35px;background:#e6e6e6"></div>
<div class="abs" style="left:1814px;top:480px;width:1px;height:35px;background:#e6e6e6"></div>
<div class="abs" style="left:1183.5px;top:517px;width:2px;height:34px;background:#dedede"></div>
<div class="abs" style="left:1311px;top:516px;width:1px;height:35px;background:#e6e6e6"></div>
<div class="abs" style="left:1437px;top:516px;width:1px;height:35px;background:#e6e6e6"></div>
<div class="abs" style="left:1563px;top:516px;width:1px;height:35px;background:#e6e6e6"></div>
<div class="abs" style="left:1689px;top:516px;width:1px;height:35px;background:#e6e6e6"></div>
<div class="abs" style="left:1759px;top:516px;width:1px;height:35px;background:#e6e6e6"></div>
<div class="abs" style="left:1814px;top:516px;width:1px;height:35px;background:#e6e6e6"></div>
<div class="abs" style="left:1311px;top:408px;width:1px;height:35px;background:#e6e6e6"></div>
<div class="abs" style="left:1563px;top:408px;width:1px;height:35px;background:#e6e6e6"></div>
<div class="abs" style="left:1814px;top:408px;width:1px;height:35px;background:#e6e6e6"></div>
<div class="abs" style="left:1183.5px;top:552px;width:2px;height:14px;background:#dedede"></div>
<div class="abs" style="left:1814px;top:552px;width:1px;height:14px;background:#e6e6e6"></div>
<div class="abs" style="left:1188px;top:556px;width:608px;height:8px;border-radius:4px;background:#c1c1c1"></div>
<div class="abs" style="left:378px;top:303px;width:16px;height:16px;border:1px solid #cfcfcf;border-radius:3px;background:#fff"></div>
<div class="abs" style="left:378px;top:346px;width:16px;height:16px;border:1px solid #cfcfcf;border-radius:3px;background:#fff"></div>
<div class="abs" style="left:378px;top:382px;width:16px;height:16px;border:1px solid #cfcfcf;border-radius:3px;background:#fff"></div>
<div class="abs" style="left:378px;top:418px;width:16px;height:16px;border:1px solid #cfcfcf;border-radius:3px;background:#fff"></div>
<div class="abs" style="left:378px;top:454px;width:16px;height:16px;border:1px solid #cfcfcf;border-radius:3px;background:#fff"></div>
<div class="abs" style="left:378px;top:490px;width:16px;height:16px;border:1px solid #cfcfcf;border-radius:3px;background:#fff"></div>
<div class="abs" style="left:378px;top:526px;width:16px;height:16px;border:1px solid #cfcfcf;border-radius:3px;background:#fff"></div>
<svg style="left:0;top:0" width="500" height="600" fill="#5c6063"><circle cx="431.3" cy="351.4" r="1.15"/><circle cx="431.3" cy="356.5" r="1.15"/><circle cx="436" cy="351.4" r="1.15"/><circle cx="436" cy="356.5" r="1.15"/><circle cx="440.6" cy="351.4" r="1.15"/><circle cx="440.6" cy="356.5" r="1.15"/><circle cx="431.3" cy="387.4" r="1.15"/><circle cx="431.3" cy="392.5" r="1.15"/><circle cx="436" cy="387.4" r="1.15"/><circle cx="436" cy="392.5" r="1.15"/><circle cx="440.6" cy="387.4" r="1.15"/><circle cx="440.6" cy="392.5" r="1.15"/><circle cx="431.3" cy="423.4" r="1.15"/><circle cx="431.3" cy="428.5" r="1.15"/><circle cx="436" cy="423.4" r="1.15"/><circle cx="436" cy="428.5" r="1.15"/><circle cx="440.6" cy="423.4" r="1.15"/><circle cx="440.6" cy="428.5" r="1.15"/><circle cx="431.3" cy="459.4" r="1.15"/><circle cx="431.3" cy="464.5" r="1.15"/><circle cx="436" cy="459.4" r="1.15"/><circle cx="436" cy="464.5" r="1.15"/><circle cx="440.6" cy="459.4" r="1.15"/><circle cx="440.6" cy="464.5" r="1.15"/><circle cx="431.3" cy="495.4" r="1.15"/><circle cx="431.3" cy="500.5" r="1.15"/><circle cx="436" cy="495.4" r="1.15"/><circle cx="436" cy="500.5" r="1.15"/><circle cx="440.6" cy="495.4" r="1.15"/><circle cx="440.6" cy="500.5" r="1.15"/><circle cx="431.3" cy="531.4" r="1.15"/><circle cx="431.3" cy="536.5" r="1.15"/><circle cx="436" cy="531.4" r="1.15"/><circle cx="436" cy="536.5" r="1.15"/><circle cx="440.6" cy="531.4" r="1.15"/><circle cx="440.6" cy="536.5" r="1.15"/></svg>
<div class="t" style="left:428px;top:304px;font-size:14px;color:#222">POM</div>
<div class="t" style="left:586px;top:304px;font-size:14px;color:#222">Description</div>
<div class="t" style="left:854px;top:304px;font-size:14px;color:#222">Grade Type</div>
<div class="t" style="left:1043px;top:304px;font-size:14px;color:#222">Grade</div>
<div class="t" style="left:1327px;top:304px;font-size:14px;color:#222">V</div>
<div class="t" style="left:1453px;top:304px;font-size:14px;color:#222">R</div>
<div class="t" style="left:1579px;top:304px;font-size:14px;color:#222">Rev</div>
<div class="t" style="left:1705px;top:304px;font-size:14px;color:#222">Tol+</div>
<div class="t" style="left:1775px;top:304px;font-size:14px;color:#222">Tol-</div>
<div class="t" style="left:1820px;top:304px;font-size:14px;color:#222">Actions</div>
<div class="t" style="left:1201px;top:304px;font-size:14px;color:#1a96ef">S</div>
<div class="t" style="left:456px;top:346px;font-size:14px;color:#222">A</div>
<div class="t" style="left:594px;top:346px;font-size:14px;color:#222;text-decoration:underline">Cuff Circumference</div>
<div class="t" style="left:854px;top:346px;font-size:14px;color:#222">Exact</div>
<div class="t" style="left:1201px;top:346px;font-size:14px;color:#1a96ef">1</div>
<div class="t" style="left:1327px;top:346px;font-size:14px;color:#222">1.5</div>
<div class="t" style="left:1453px;top:346px;font-size:14px;color:#fff">0.5</div>
<div class="t" style="left:1579px;top:346px;font-size:14px;color:#222">2</div>
<div class="t" style="left:1705px;top:346px;font-size:14px;color:#222">1</div>
<div class="t" style="left:1775px;top:346px;font-size:14px;color:#222">1</div>
<div class="t" style="left:456px;top:382px;font-size:14px;color:#222">A</div>
<div class="t" style="left:594px;top:382px;font-size:14px;color:#222">(copy) Cuff Circumference</div>
<div class="t" style="left:854px;top:382px;font-size:14px;color:#222">Exact</div>
<div class="t" style="left:1201px;top:382px;font-size:14px;color:#1a96ef">2.50</div>
<div class="t" style="left:1327px;top:382px;font-size:14px;color:#bdbdbd">Enter</div>
<div class="t" style="left:1579px;top:382px;font-size:14px;color:#bdbdbd">Enter</div>
<div class="t" style="left:1705px;top:382px;font-size:14px;color:#222">1</div>
<div class="t" style="left:1775px;top:382px;font-size:14px;color:#222">1</div>
<div class="t" style="left:456px;top:418px;font-size:14px;color:#222;font-weight:bold">HEADING</div>
<div class="t" style="left:456px;top:454px;font-size:14px;color:#222">A</div>
<div class="t" style="left:594px;top:454px;font-size:14px;color:#222">Top Circumference</div>
<div class="t" style="left:854px;top:454px;font-size:14px;color:#222">Single</div>
<div class="t" style="left:1043px;top:454px;font-size:14px;color:#222">2</div>
<div class="t" style="left:1201px;top:454px;font-size:14px;color:#1a96ef">1</div>
<div class="t" style="left:1327px;top:454px;font-size:14px;color:#bdbdbd">Enter</div>
<div class="t" style="left:1579px;top:454px;font-size:14px;color:#222">1</div>
<div class="t" style="left:1705px;top:454px;font-size:14px;color:#222">1</div>
<div class="t" style="left:1775px;top:454px;font-size:14px;color:#222">1</div>
<div class="t" style="left:456px;top:490px;font-size:14px;color:#222">A</div>
<div class="t" style="left:594px;top:490px;font-size:14px;color:#222">(copy) Circumference</div>
<div class="t" style="left:854px;top:490px;font-size:14px;color:#222">Single</div>
<div class="t" style="left:1043px;top:490px;font-size:14px;color:#222">2</div>
<div class="t" style="left:1201px;top:490px;font-size:14px;color:#1a96ef">3</div>
<div class="t" style="left:1327px;top:490px;font-size:14px;color:#222">3</div>
<div class="t" style="left:1579px;top:490px;font-size:14px;color:#bdbdbd">Enter</div>
<div class="t" style="left:1705px;top:490px;font-size:14px;color:#222">1</div>
<div class="t" style="left:1775px;top:490px;font-size:14px;color:#222">1</div>
<div class="t" style="left:456px;top:526px;font-size:14px;color:#0e9f50;font-weight:bold;font-style:italic;text-decoration:underline">A</div>
<div class="t" style="left:594px;top:526px;font-size:14px;color:#0e9f50;font-weight:bold;font-style:italic;text-decoration:underline">Chest Circumference</div>
<div class="t" style="left:854px;top:526px;font-size:14px;color:#0e9f50;font-weight:bold;font-style:italic;text-decoration:underline">Exact</div>
<div class="t" style="left:1043px;top:526px;font-size:14px;color:#0e9f50;font-weight:bold;font-style:italic;text-decoration:underline">2</div>
<div class="t" style="left:1201px;top:526px;font-size:14px;color:#0e9f50;font-weight:bold;font-style:italic;text-decoration:underline">1</div>
<div class="t" style="left:1327px;top:526px;font-size:14px;color:#0e9f50;font-weight:bold;font-style:italic;text-decoration:underline">2</div>
<div class="t" style="left:1453px;top:526px;font-size:14px;color:#fff;font-weight:bold;font-style:italic;text-decoration:underline">1</div>
<div class="t" style="left:1579px;top:526px;font-size:14px;color:#0e9f50;font-weight:bold;font-style:italic;text-decoration:underline">1.5</div>
<div class="t" style="left:1705px;top:526px;font-size:14px;color:#0e9f50;font-weight:bold;font-style:italic;text-decoration:underline">1</div>
<div class="t" style="left:1775px;top:526px;font-size:14px;color:#0e9f50;font-weight:bold;font-style:italic;text-decoration:underline">1</div>
<svg style="left:0;top:1px" width="1904" height="600" fill="none" stroke="#6e6e6e" stroke-width="1.1" stroke-linejoin="round" stroke-linecap="round"><path d="M1846.8 347.5 H1859.2 M1850.3 347.5 V345.7 Q1850.3 345 1851 345 H1855 Q1855.7 345 1855.7 345.7 V347.5 M1848 347.7 L1849 359.5 Q1849.1 360.5 1850 360.5 H1856 Q1856.9 360.5 1857 359.5 L1858 347.7"/><path d="M1846.8 383.5 H1859.2 M1850.3 383.5 V381.7 Q1850.3 381 1851 381 H1855 Q1855.7 381 1855.7 381.7 V383.5 M1848 383.7 L1849 395.5 Q1849.1 396.5 1850 396.5 H1856 Q1856.9 396.5 1857 395.5 L1858 383.7"/><path d="M1846.8 419.5 H1859.2 M1850.3 419.5 V417.7 Q1850.3 417 1851 417 H1855 Q1855.7 417 1855.7 417.7 V419.5 M1848 419.7 L1849 431.5 Q1849.1 432.5 1850 432.5 H1856 Q1856.9 432.5 1857 431.5 L1858 419.7"/><path d="M1846.8 455.5 H1859.2 M1850.3 455.5 V453.7 Q1850.3 453 1851 453 H1855 Q1855.7 453 1855.7 453.7 V455.5 M1848 455.7 L1849 467.5 Q1849.1 468.5 1850 468.5 H1856 Q1856.9 468.5 1857 467.5 L1858 455.7"/><path d="M1846.8 491.5 H1859.2 M1850.3 491.5 V489.7 Q1850.3 489 1851 489 H1855 Q1855.7 489 1855.7 489.7 V491.5 M1848 491.7 L1849 503.5 Q1849.1 504.5 1850 504.5 H1856 Q1856.9 504.5 1857 503.5 L1858 491.7"/><path d="M1846.8 527.5 H1859.2 M1850.3 527.5 V525.7 Q1850.3 525 1851 525 H1855 Q1855.7 525 1855.7 525.7 V527.5 M1848 527.7 L1849 539.5 Q1849.1 540.5 1850 540.5 H1856 Q1856.9 540.5 1857 539.5 L1858 527.7"/></svg>

<!-- popup -->
<div class="abs" style="left:596px;top:421px;width:213px;height:94px;border:5px solid #f0288c;background:#fff;box-shadow:0 4px 16px rgba(0,0,0,0.12)"></div>
<div class="abs" style="left:608px;top:460px;width:20px;height:20px;border-radius:3.5px;background:#232323"></div>
<div class="abs" style="left:632px;top:460px;width:20px;height:20px;border-radius:3.5px;background:#6c6f73"></div>
<div class="abs" style="left:656px;top:460px;width:20px;height:20px;border-radius:3.5px;background:#ff6030"></div>
<div class="abs" style="left:680px;top:460px;width:20px;height:20px;border-radius:3.5px;background:#fca73e"></div>
<div class="abs" style="left:704px;top:460px;width:20px;height:20px;border-radius:3.5px;background:#ffcb00"></div>
<div class="abs" style="left:728px;top:460px;width:20px;height:20px;border-radius:3.5px;background:#b5d944"></div>
<div class="abs" style="left:752px;top:460px;width:20px;height:20px;border-radius:3.5px;background:#04a65a"></div>
<div class="abs" style="left:776px;top:460px;width:20px;height:20px;border-radius:3.5px;background:#00c8b0"></div>
<div class="abs" style="left:608px;top:484px;width:20px;height:20px;border-radius:3.5px;background:#0a9dfd"></div>
<div class="abs" style="left:632px;top:484px;width:20px;height:20px;border-radius:3.5px;background:#0086c3"></div>
<div class="abs" style="left:656px;top:484px;width:20px;height:20px;border-radius:3.5px;background:#a05fdd"></div>
<div class="abs" style="left:680px;top:484px;width:20px;height:20px;border-radius:3.5px;background:#fe1186"></div>
<div class="abs" style="left:704px;top:484px;width:20px;height:20px;border-radius:3.5px;background:#ecc7fc"></div>
<div class="abs" style="left:728px;top:484px;width:20px;height:20px;border-radius:3.5px;background:#ff57c0"></div>
<div class="abs" style="left:752px;top:484px;width:20px;height:20px;border-radius:3.5px;background:#272e4f"></div>
<div class="abs" style="left:776px;top:484px;width:20px;height:20px;border-radius:3.5px;background:#d23018"></div>
<div class="abs" style="left:608px;top:432px;width:20px;height:20px;border-radius:3px;background:#f4f4f4"></div>
<div class="abs" style="left:632px;top:432px;width:20px;height:20px;border-radius:3px;background:#f4f4f4"></div>
<div class="abs" style="left:656px;top:432px;width:20px;height:20px;border-radius:3px;background:#f4f4f4"></div>
<svg style="left:0;top:0" width="900" height="600" fill="none" stroke="#1a96f8" stroke-width="1.4" stroke-linecap="round" stroke-linejoin="round">
 <path d="M613.3 436.3 H618.6 Q621.6 436.3 621.6 439 Q621.6 441.5 618.6 441.5 H613.3 M618.6 441.5 Q622.3 441.5 622.3 444.3 Q622.3 447.3 618.6 447.3 H613.3 M614.5 436.3 V447.3"/>
 <path d="M640.3 436.3 H647.3 M637 447.3 H644 M644.5 436.3 L640.5 447.3"/>
 <path d="M660.3 436.3 H663.3 M668.3 436.3 H671.3 M661.8 436.3 V442.5 Q661.8 446.3 665.8 446.3 Q669.8 446.3 669.8 442.5 V436.3 M659.8 449.3 H672"/>
 <path d="M756.8 469.8 L760.3 473.2 L767 466.6" stroke="#fff" stroke-width="1.1"/>
</svg>

<!-- window chrome -->
<div class="abs" style="left:66px;top:825px;width:1838px;height:34px;background:linear-gradient(rgba(120,125,140,0),rgba(120,125,140,0.06) 70%,rgba(120,125,140,0.16))"></div>
<div class="abs" style="left:0;top:0;width:1px;height:859px;background:#5d6275"></div>
<svg style="left:0;top:0" width="1904" height="859">
 <path d="M0 0 H6 Q1.5 1.5 0 6 Z" fill="#000"/>
 <path d="M1904 853 V859 H1898 Q1902.5 857.5 1904 853 Z" fill="#000"/>
 <path d="M0 853 V859 H6 Q1.5 857.5 0 853 Z" fill="#000"/>
 <path d="M1904 0 V6 Q1902.5 1.5 1898 0 Z" fill="#000"/>
</svg>
</body></html>
